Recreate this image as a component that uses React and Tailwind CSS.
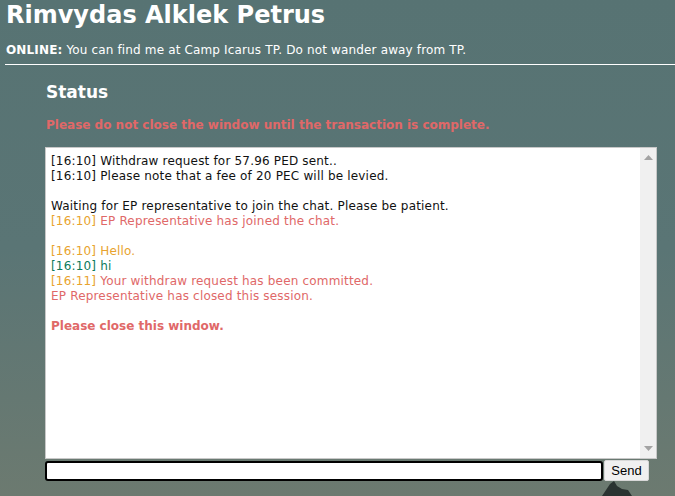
import { useState } from 'react'

const Ts = ({ children }) => <span className="text-[#e8a32e]">{children}</span>

export default function App() {
  const [msg, setMsg] = useState('')

  return (
    <div className="relative h-[496px] w-[675px] overflow-hidden bg-gradient-to-b from-[#577373] via-[#5a7575] to-[#6c7a70] font-['DejaVu_Sans',sans-serif] text-white">
      <h1 className="px-[6px] pt-[1px] text-[24px] font-bold leading-[28px]">Rimvydas Alklek Petrus</h1>
      <p className="mt-[14px] px-[6px] text-[12px] leading-[15px] tracking-[0.15px]">
        <span className="font-bold">ONLINE:</span> You can find me at Camp Icarus TP. Do not wander away from TP.
      </p>
      <div className="ml-[5px] mt-[6px] h-px bg-white" />

      <div className="pl-[46px] pr-[18px]">
        <h2 className="mt-[16px] text-[17px] font-bold leading-[22px]">Status</h2>
        <p className="mt-[15px] text-[12px] font-bold leading-[15px] text-[#e06868]">
          Please do not close the window until the transaction is complete.
        </p>

        <div className="ml-[-1px] mt-[14px] flex h-[312px] w-[612px] border border-[#c8c8c8] bg-white">
          <div className="flex-1 px-[5px] pt-[6px] text-[12px] leading-[15px] tracking-[0.18px] text-[#111]">
            <div>[16:10] Withdraw request for 57.96 PED sent..</div>
            <div>[16:10] Please note that a fee of 20 PEC will be levied.</div>
            <div className="h-[15px]" />
            <div>Waiting for EP representative to join the chat. Please be patient.</div>
            <div className="text-[#e06868]"><Ts>[16:10]</Ts> EP Representative has joined the chat.</div>
            <div className="h-[15px]" />
            <div className="text-[#e8a32e]">[16:10] Hello.</div>
            <div className="text-[#0b7a5c]">[16:10] hi</div>
            <div className="text-[#e06868]"><Ts>[16:11]</Ts> Your withdraw request has been committed.</div>
            <div className="text-[#e06868]">EP Representative has closed this session.</div>
            <div className="h-[15px]" />
            <div className="font-bold tracking-normal text-[#e06868]">Please close this window.</div>
          </div>
          <div className="flex w-[16px] flex-col items-center justify-between bg-[#f0f0f0] py-[7px]">
            <svg width="9" height="5" viewBox="0 0 9 5"><path d="M0 5 L4.5 0 L9 5 Z" fill="#a3a3a3" /></svg>
            <svg width="9" height="5" viewBox="0 0 9 5"><path d="M0 0 L4.5 5 L9 0 Z" fill="#a3a3a3" /></svg>
          </div>
        </div>

        <div className="ml-[-1px] mt-[1px] flex items-center gap-[1px]">
          <input
            value={msg}
            onChange={(e) => setMsg(e.target.value)}
            className="h-[20px] w-[558px] rounded-[3px] border-2 border-black bg-white px-1 text-[13px] text-black outline-none"
          />
          <button className="h-[21px] w-[45px] rounded-[2px] border border-[#d8d8d8] bg-[#f0f0f0] font-['Liberation_Sans',sans-serif] text-[13px] text-black">
            Send
          </button>
        </div>
      </div>

      <svg className="absolute bottom-0 left-[598px]" width="50" height="16" viewBox="0 0 50 16">
        <path d="M4 16 L12 4 L16 1 L19 6 L24 9 L30 10 L34 16 Z" fill="#2a3331" />
      </svg>
    </div>
  )
}
